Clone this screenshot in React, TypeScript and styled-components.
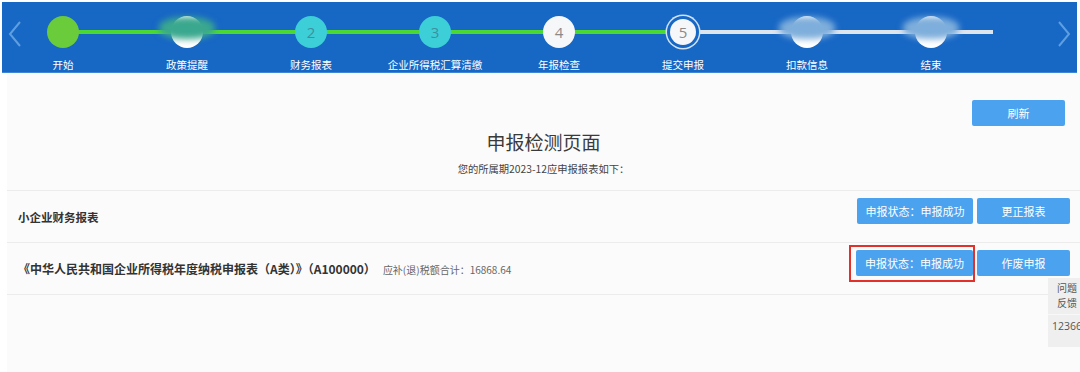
import React from "react";
import styled, { createGlobalStyle } from "styled-components";

const GlobalStyle = createGlobalStyle`
  html, body {
    margin: 0;
    padding: 0;
    background: #ffffff;
  }
  body {
    font-family: "Noto Sans CJK SC", "Noto Sans", "Liberation Sans", sans-serif;
    overflow: hidden;
  }
`;

type StepState = "done" | "hidden-done" | "passed" | "todo" | "current" | "hidden";

const steps: { label: string; num: string; state: StepState }[] = [
  { label: "开始", num: "", state: "done" },
  { label: "政策提醒", num: "1", state: "hidden-done" },
  { label: "财务报表", num: "2", state: "passed" },
  { label: "企业所得税汇算清缴", num: "3", state: "passed" },
  { label: "年报检查", num: "4", state: "todo" },
  { label: "提交申报", num: "5", state: "current" },
  { label: "扣款信息", num: "6", state: "hidden" },
  { label: "结束", num: "7", state: "hidden" },
];

const CURRENT = 5;

const Page = styled.div`
  position: relative;
  width: 1080px;
  height: 372px;
  display: flex;
  flex-direction: column;
  overflow: hidden;
`;

const Header = styled.div`
  position: relative;
  margin: 2px 3px 0 2px;
  height: 70px;
  background: #1767c5;
  border-bottom: 1px solid #3f86d6;
`;

const Arrow = styled.svg<{ $side: "left" | "right" }>`
  position: absolute;
  top: 18px;
  ${(p) => (p.$side === "left" ? "left: 5px;" : "right: 5px;")}
  width: 16px;
  height: 28px;
`;

const StepRow = styled.div`
  display: flex;
  margin-left: -1px;
`;

const Step = styled.div<{ $left?: string; $right?: string }>`
  position: relative;
  width: 124px;
  display: flex;
  flex-direction: column;
  align-items: center;
  padding-top: 14px;

  &::before,
  &::after {
    content: "";
    position: absolute;
    top: 28px;
    height: 4px;
    width: 50%;
  }
  &::before {
    left: 0;
    background: ${(p) => p.$left || "transparent"};
  }
  &::after {
    left: 50%;
    background: ${(p) => p.$right || "transparent"};
  }
`;

const circleColors: Record<StepState, string> = {
  done: "#6acb3b",
  "hidden-done": "#ffffff",
  passed: "#3ccfd7",
  todo: "#f6f7f9",
  current: "#f6f7f9",
  hidden: "#ffffff",
};

const Circle = styled.div<{ $state: StepState }>`
  position: relative;
  z-index: 1;
  width: 32px;
  height: 32px;
  border-radius: 50%;
  background: ${(p) => circleColors[p.$state]};
  color: ${(p) => (p.$state === "passed" ? "#3f8f9e" : "#8a8a8a")};
  font-family: "Open Sans", "Liberation Sans", sans-serif;
  font-size: 15px;
  display: flex;
  align-items: center;
  justify-content: center;
  margin-bottom: 10px;
  ${(p) =>
    p.$state === "current" &&
    `
    width: 26px;
    height: 26px;
    margin: 3px 0 13px;
    box-shadow: 0 0 0 3px #1767c5, 0 0 0 4.5px #cfe2f6;
  `}
`;

const Blur = styled.div<{ $tone: string }>`
  position: absolute;
  z-index: 2;
  top: 15px;
  left: 50%;
  margin-left: -28px;
  width: 56px;
  height: 22px;
  border-radius: 45%;
  background: ${(p) => p.$tone};
  filter: blur(3px);
`;

const StepLabel = styled.div`
  color: #ffffff;
  font-size: 10.5px;
  line-height: 14px;
  white-space: nowrap;
`;

const Panel = styled.div`
  flex: 1;
  margin-left: 7px;
  background: #fbfbfb;
  display: flex;
  flex-direction: column;
`;

const TopSection = styled.div`
  display: flex;
  flex-direction: column;
  align-items: center;
  padding: 27px 0 14px;
`;

const Toolbar = styled.div`
  align-self: stretch;
  display: flex;
  justify-content: flex-end;
  padding-right: 15px;
`;

const Button = styled.button<{ $width: number }>`
  width: ${(p) => p.$width}px;
  height: 26px;
  border: none;
  border-radius: 2px;
  background: #4ba2ee;
  color: #ffffff;
  font-family: inherit;
  font-size: 11px;
  padding: 0;
  cursor: pointer;
`;

const Title = styled.h1`
  margin: 2px 0 0;
  font-size: 19px;
  line-height: 28px;
  font-weight: 400;
  color: #3a3a3a;
`;

const Subtitle = styled.div`
  margin-top: 6px;
  font-size: 10.3px;
  line-height: 14px;
  color: #444;
`;

const Row = styled.div`
  height: 51px;
  display: flex;
  align-items: center;
  justify-content: space-between;
  padding: 0 10px 0 11px;
  border-top: 1px solid #ececec;

  &:last-child {
    border-bottom: 1px solid #ececec;
  }
`;

const RowTitle = styled.div<{ $size: number }>`
  font-size: ${(p) => p.$size}px;
  font-weight: 700;
  color: #333;
  display: flex;
  align-items: baseline;
`;

const Note = styled.span`
  margin-left: 7px;
  font-size: 10px;
  font-weight: 400;
  color: #666;
`;

const Actions = styled.div`
  align-self: flex-start;
  margin-top: 7px;
  display: flex;
  gap: 4px;
`;

const Marked = styled.div`
  position: relative;
  display: flex;
`;

const Highlight = styled.div`
  position: absolute;
  top: -5px;
  right: -2px;
  bottom: -6px;
  left: -7px;
  border: 2px solid #e2302b;
`;

const Feedback = styled.div`
  position: absolute;
  left: 1048px;
  top: 278px;
  width: 40px;
  background: #efefef;
  color: #555;
  font-size: 10px;
`;

const FeedbackTop = styled.div`
  padding: 2px 0 4px 9px;
  line-height: 15px;
  border-bottom: 1px solid #f8f8f8;
`;

const FeedbackNum = styled.div`
  padding: 4px 0 14px 4px;
  line-height: 14px;
  white-space: nowrap;
  font-family: "Open Sans", "Liberation Sans", sans-serif;
  font-size: 10.5px;
`;

const lineColor = (i: number) => (i < CURRENT ? "#4cd832" : "#dfe5ee");

export default function App() {
  return (
    <>
      <GlobalStyle />
      <Page>
        <Header>
          <StepRow>
            {steps.map((s, i) => (
              <Step
                key={s.label}
                $left={i > 0 ? lineColor(i - 1) : undefined}
                $right={lineColor(i)}
              >
                <Circle $state={s.state}>
                  {s.state === "passed" || s.state === "todo" || s.state === "current"
                    ? s.num
                    : ""}
                </Circle>
                {s.state === "hidden-done" && <Blur $tone="#3aa88e" />}
                {s.state === "hidden" && <Blur $tone="#7eaedb" />}
                <StepLabel>{s.label}</StepLabel>
              </Step>
            ))}
          </StepRow>
          <Arrow $side="left" viewBox="0 0 16 28">
            <polyline points="13,2 3,14 13,26" fill="none" stroke="#5d9fe0" strokeWidth="2" />
          </Arrow>
          <Arrow $side="right" viewBox="0 0 16 28">
            <polyline points="3,2 13,14 3,26" fill="none" stroke="#5d9fe0" strokeWidth="2" />
          </Arrow>
        </Header>

        <Panel>
          <TopSection>
            <Toolbar>
              <Button $width={93}>刷新</Button>
            </Toolbar>
            <Title>申报检测页面</Title>
            <Subtitle>您的所属期2023-12应申报报表如下：</Subtitle>
          </TopSection>

          <Row>
            <RowTitle $size={11.5}>小企业财务报表</RowTitle>
            <Actions>
              <Button $width={116}>申报状态：申报成功</Button>
              <Button $width={93}>更正报表</Button>
            </Actions>
          </Row>
          <Row>
            <RowTitle $size={12}>
              《中华人民共和国企业所得税年度纳税申报表（A类）》（A100000）
              <Note>应补(退)税额合计：16868.64</Note>
            </RowTitle>
            <Actions>
              <Marked>
                <Button $width={117}>申报状态：申报成功</Button>
                <Highlight />
              </Marked>
              <Button $width={93}>作废申报</Button>
            </Actions>
          </Row>
        </Panel>

        <Feedback>
          <FeedbackTop>
            问题
            <br />
            反馈
          </FeedbackTop>
          <FeedbackNum>12366</FeedbackNum>
        </Feedback>
      </Page>
    </>
  );
}
